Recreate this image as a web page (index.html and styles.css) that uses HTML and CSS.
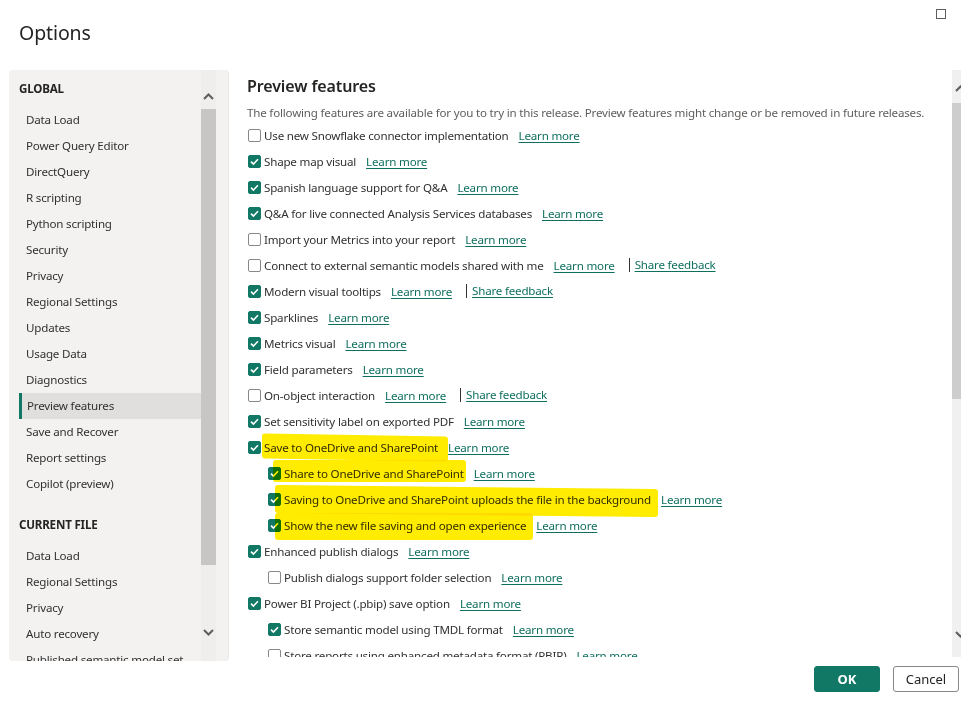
FILE: index.html
```html
<!DOCTYPE html>
<html lang="en">
<head>
<meta charset="utf-8">
<title>Options</title>
<link rel="stylesheet" href="styles.css">
</head>
<body>
<div class="window">
  <header class="top">
    <h1 class="title">Options</h1>
    <span class="restore"></span>
  </header>
  <div class="main">
    <nav class="nav">
      <div class="nav-list">
        <div class="nav-head">GLOBAL</div>
        <div class="nav-item">Data Load</div>
        <div class="nav-item">Power Query Editor</div>
        <div class="nav-item">DirectQuery</div>
        <div class="nav-item">R scripting</div>
        <div class="nav-item">Python scripting</div>
        <div class="nav-item">Security</div>
        <div class="nav-item">Privacy</div>
        <div class="nav-item">Regional Settings</div>
        <div class="nav-item">Updates</div>
        <div class="nav-item">Usage Data</div>
        <div class="nav-item">Diagnostics</div>
        <div class="nav-item selected">Preview features</div>
        <div class="nav-item">Save and Recover</div>
        <div class="nav-item">Report settings</div>
        <div class="nav-item">Copilot (preview)</div>
        <div class="nav-head nav-head-2">CURRENT FILE</div>
        <div class="nav-item">Data Load</div>
        <div class="nav-item">Regional Settings</div>
        <div class="nav-item">Privacy</div>
        <div class="nav-item">Auto recovery</div>
        <div class="nav-item">Published semantic model set</div>
      </div>
      <div class="nav-scroll">
        <svg class="chev" width="15" height="12" viewBox="0 0 15 12"><path d="M3 8 L7.5 3.5 L12 8" fill="none" stroke="#605e5c" stroke-width="2"/></svg>
        <div class="nav-thumb"></div>
        <div class="nav-track"></div>
        <svg class="chev" width="15" height="12" viewBox="0 0 15 12"><path d="M3 4 L7.5 8.5 L12 4" fill="none" stroke="#605e5c" stroke-width="2"/></svg>
      </div>
    </nav>
    <section class="content">
      <div class="content-inner">
        <h2 class="heading">Preview features</h2>
        <p class="desc">The following features are available for you to try in this release. Preview features might change or be removed in future releases.</p>
        <ul class="opts">
          <li class="hl hl1"></li>
          <li class="hl hl2"></li>
          <li class="hl hl3"></li>
          <li class="hl hl4"></li>
          <li class="opt"><span class="cb"></span><span class="label">Use new Snowflake connector implementation</span><a class="link">Learn more</a></li>
          <li class="opt"><span class="cb on"></span><span class="label">Shape map visual</span><a class="link">Learn more</a></li>
          <li class="opt"><span class="cb on"></span><span class="label">Spanish language support for Q&amp;A</span><a class="link">Learn more</a></li>
          <li class="opt"><span class="cb on"></span><span class="label">Q&amp;A for live connected Analysis Services databases</span><a class="link">Learn more</a></li>
          <li class="opt"><span class="cb"></span><span class="label">Import your Metrics into your report</span><a class="link">Learn more</a></li>
          <li class="opt"><span class="cb"></span><span class="label">Connect to external semantic models shared with me</span><a class="link">Learn more</a><a class="link fb">Share feedback</a></li>
          <li class="opt"><span class="cb on"></span><span class="label">Modern visual tooltips</span><a class="link">Learn more</a><a class="link fb">Share feedback</a></li>
          <li class="opt"><span class="cb on"></span><span class="label">Sparklines</span><a class="link">Learn more</a></li>
          <li class="opt"><span class="cb on"></span><span class="label">Metrics visual</span><a class="link">Learn more</a></li>
          <li class="opt"><span class="cb on"></span><span class="label">Field parameters</span><a class="link">Learn more</a></li>
          <li class="opt"><span class="cb"></span><span class="label">On-object interaction</span><a class="link">Learn more</a><a class="link fb">Share feedback</a></li>
          <li class="opt"><span class="cb on"></span><span class="label">Set sensitivity label on exported PDF</span><a class="link">Learn more</a></li>
          <li class="opt"><span class="cb on"></span><span class="label">Save to OneDrive and SharePoint</span><a class="link">Learn more</a></li>
          <li class="opt sub"><span class="cb on"></span><span class="label">Share to OneDrive and SharePoint</span><a class="link">Learn more</a></li>
          <li class="opt sub"><span class="cb on"></span><span class="label">Saving to OneDrive and SharePoint uploads the file in the background</span><a class="link">Learn more</a></li>
          <li class="opt sub"><span class="cb on"></span><span class="label">Show the new file saving and open experience</span><a class="link">Learn more</a></li>
          <li class="opt"><span class="cb on"></span><span class="label">Enhanced publish dialogs</span><a class="link">Learn more</a></li>
          <li class="opt sub"><span class="cb"></span><span class="label">Publish dialogs support folder selection</span><a class="link">Learn more</a></li>
          <li class="opt"><span class="cb on"></span><span class="label">Power BI Project (.pbip) save option</span><a class="link">Learn more</a></li>
          <li class="opt sub"><span class="cb on"></span><span class="label">Store semantic model using TMDL format</span><a class="link">Learn more</a></li>
          <li class="opt sub"><span class="cb"></span><span class="label">Store reports using enhanced metadata format (PBIR)</span><a class="link">Learn more</a></li>
        </ul>
      </div>
      <div class="vscroll">
        <div class="vscroll-in">
          <svg class="chev" width="17" height="14" viewBox="0 0 17 14"><path d="M4 9 L8.5 4.5 L13 9" fill="none" stroke="#605e5c" stroke-width="2"/></svg>
          <div class="v-thumb"></div>
          <div class="v-track"></div>
          <svg class="chev" width="17" height="14" viewBox="0 0 17 14"><path d="M4 5 L8.5 9.5 L13 5" fill="none" stroke="#605e5c" stroke-width="2"/></svg>
        </div>
      </div>
    </section>
  </div>
  <footer class="foot">
    <button class="btn ok">OK</button>
    <button class="btn cancel">Cancel</button>
  </footer>
</div>
</body>
</html>
```

FILE: styles.css
```css
* { box-sizing: border-box; }
html, body { margin: 0; padding: 0; background: #ffffff; overflow: hidden; }
body {
  font-family: "Segoe UI", "Noto Sans", "Open Sans", sans-serif;
  font-size: 11.6px;
  letter-spacing: -0.2px;
  color: #323130;
}
.window { width: 961px; height: 702px; display: flex; flex-direction: column; }

.top { height: 70px; display: flex; justify-content: space-between; align-items: flex-start; }
.title {
  margin: 0;
  padding: 19px 0 0 19px;
  font-size: 19.5px;
  letter-spacing: -0.1px;
  line-height: 28px;
  font-weight: 400;
  color: #252423;
}
.restore {
  width: 10px; height: 10px;
  margin: 9px 15px 0 0;
  border: 1px solid #605e5c;
}

.main { height: 591px; display: flex; }

.nav {
  margin-left: 9px;
  width: 219px;
  height: 591px;
  background: #f3f2f1;
  border-radius: 4px;
  box-shadow: 1px 0 0 #ebeae9;
  display: flex;
  overflow: hidden;
  padding-right: 12px;
}
.nav-list { width: 192px; padding: 6px 0 0 10px; overflow: hidden; }
.nav-head {
  height: 26px; line-height: 26px;
  font-weight: 700; font-size: 11.6px;
  color: #252423;
  margin-bottom: 5px;
}
.nav-head-2 { margin-top: 15px; }
.nav-item {
  height: 26px; line-height: 26px;
  padding-left: 7px;
  white-space: nowrap;
  color: #323130;
}
.nav-item.selected {
  background: #e1dfdd;
  border-left: 3px solid #117865;
  padding-left: 5px;
}
.nav-scroll {
  width: 15px;
  display: flex; flex-direction: column; align-items: center;
  background: #efeeed;
  padding-top: 21px;
}
.nav-scroll .chev { display: block; flex-shrink: 0; }
.nav-thumb { width: 15px; height: 456px; background: #c8c6c4; margin-top: 6px; }
.nav-track { flex: 0 0 61px; }

.content { flex: 1; margin-left: 19px; display: flex; height: 587px; overflow: hidden; }
.content-inner { flex: 1; padding-top: 4px; overflow: hidden; }
.heading {
  margin: 0;
  font-size: 16px;
  letter-spacing: -0.1px;
  line-height: 24px;
  font-weight: 600;
  color: #252423;
}
.desc {
  margin: 6px 0 0;
  line-height: 18px;
  color: #605e5c;
  white-space: nowrap;
}
.opts { list-style: none; margin: 0; padding: 0; position: relative; }
.opt {
  height: 26px;
  display: flex;
  align-items: center;
  white-space: nowrap;
  padding-left: 1px;
  color: #323130;
}
.opt.sub { padding-left: 21px; }
.cb {
  width: 13px; height: 13px;
  flex-shrink: 0;
  border: 1px solid #8a8886;
  border-radius: 2px;
  background: #ffffff;
  margin-right: 3px;
}
.cb.on {
  border-color: #117865;
  background: #117865 url("data:image/svg+xml;utf8,<svg xmlns='http://www.w3.org/2000/svg' width='11' height='11' viewBox='0 0 11 11'><path d='M2 5.6 L4.4 8 L9 3.2' fill='none' stroke='white' stroke-width='1.6'/></svg>") center / 11px 11px no-repeat;
}
.link {
  margin-left: 10px;
  color: #0f6f5f;
  text-decoration: underline;
  text-underline-offset: 2px;
}
.link.fb {
  margin-left: 14px;
  padding-left: 5px;
  border-left: 1px solid #323130;
  line-height: 14px;
}

.hl {
  position: absolute;
  background: #ffec00;
  mix-blend-mode: multiply;
  border-radius: 3px;
  pointer-events: none;
}
.hl1 { left: 15px; top: 313px; width: 186px; height: 25px; transform: skewY(1deg); }
.hl2 { left: 26px; top: 338px; width: 193px; height: 22px; }
.hl3 { left: 28px; top: 365px; width: 383px; height: 28px; transform: skewY(0.6deg); }
.hl4 { left: 28px; top: 391px; width: 258px; height: 27px; }

.vscroll { width: 9px; flex-shrink: 0; overflow: hidden; }
.vscroll-in {
  width: 17px; height: 587px;
  background: #f0f0f0;
  display: flex; flex-direction: column; align-items: center;
  padding-top: 12px;
}
.vscroll-in .chev { display: block; flex-shrink: 0; }
.v-thumb { width: 17px; height: 296px; background: #cdcdcd; margin-top: 7px; }
.v-track { flex: 1; }
.vscroll-in .chev:last-child { margin-bottom: 16px; }

.foot {
  display: flex;
  justify-content: flex-end;
  gap: 13px;
  padding: 5px 2px 0 0;
}
.btn {
  width: 66px; height: 26px;
  font-family: inherit;
  font-size: 13px;
  border-radius: 3px;
  padding: 0;
}
.btn.ok { background: #117865; color: #ffffff; border: 1px solid #117865; font-weight: 700; }
.btn.cancel { background: #ffffff; color: #252423; border: 1px solid #8a8886; font-weight: 400; }
```
